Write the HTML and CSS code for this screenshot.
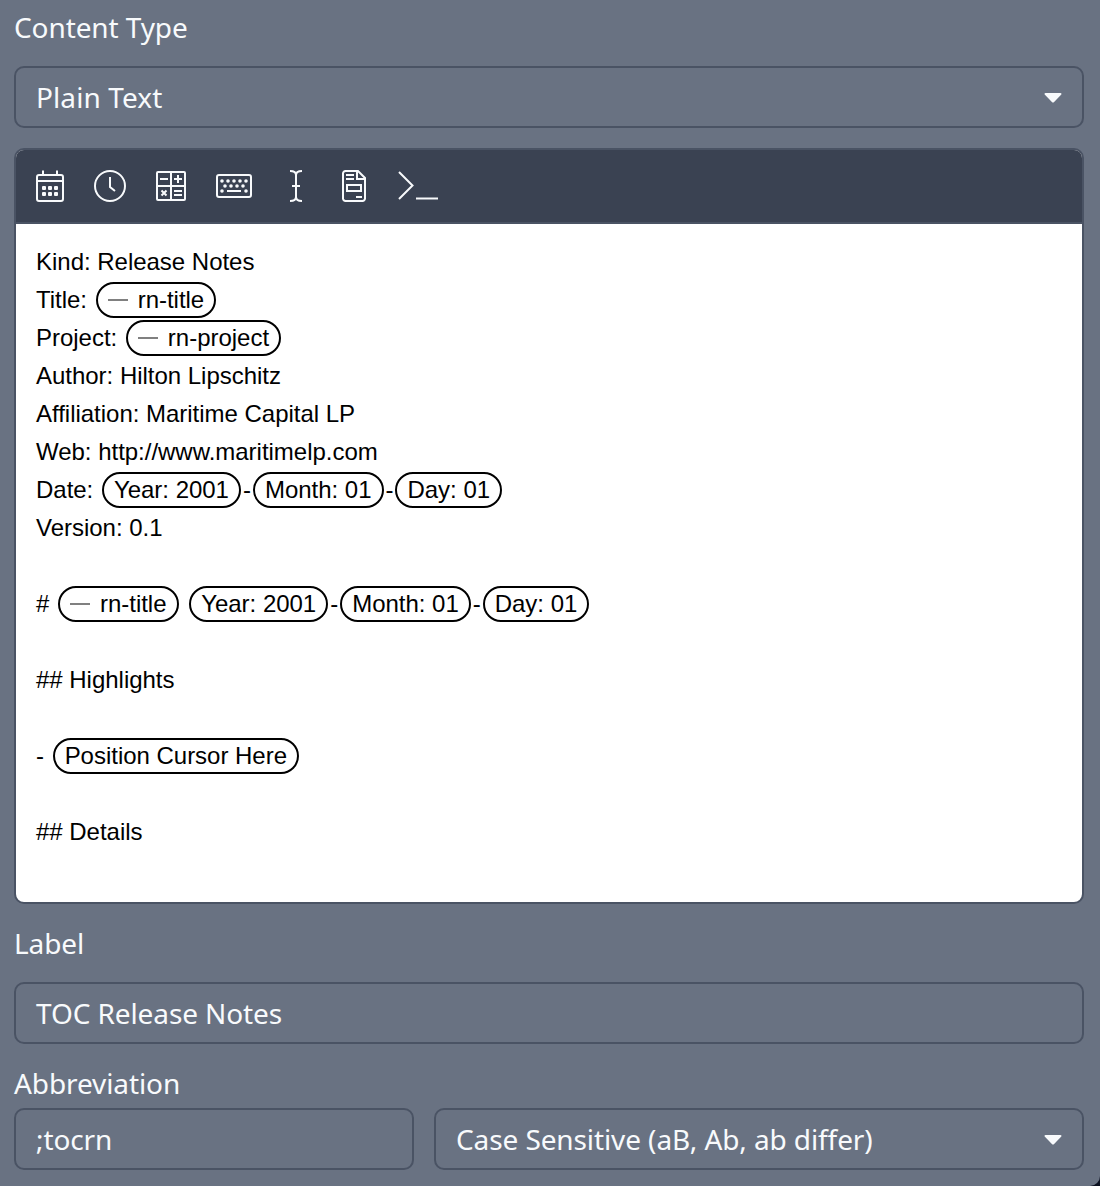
FILE: index.html
```html
<!DOCTYPE html>
<html lang="en">
<head>
<meta charset="utf-8">
<title>Snippet editor</title>
<link rel="stylesheet" href="styles.css">
</head>
<body>
<main class="panel">
  <div class="label">Content Type</div>
  <div class="field type-field"><span class="loose">Plain Text</span><svg class="caret" viewBox="0 0 18 10"><path d="M1.500 0h15c1 0 1.300 1 .6 1.700L10.100 8.900q-1.100 1-2.200 0L.9 1.700C.2 1 .5 0 1.500 0z"/></svg></div>
  <section class="editor">
    <div class="toolbar">
      <svg class="icon calendar" viewBox="0 0 28 32"><path d="M1 7a2 2 0 0 1 2-2h22a2 2 0 0 1 2 2v22a2 2 0 0 1-2 2H3a2 2 0 0 1-2-2zM1 11h26M7 .5V5M21 .5V5"/><g class="solid"><rect x="6" y="16" width="4" height="4" rx="1"/><rect x="12" y="16" width="4" height="4" rx="1"/><rect x="18" y="16" width="4" height="4" rx="1"/><rect x="6" y="22" width="4" height="4" rx="1"/><rect x="12" y="22" width="4" height="4" rx="1"/><rect x="18" y="22" width="4" height="4" rx="1"/></g></svg>
      <svg class="icon clock" viewBox="0 0 32 32"><circle cx="16" cy="16" r="15"/><path d="M16 7v10l5 4"/></svg>
      <svg class="icon calc" viewBox="0 0 30 30"><rect x="1" y="1" width="28" height="28" rx="1"/><path d="M15 1v28M1 15h28M4 8h8M18 8h8M22 4v8M18 20h8M18 24h8M5.500 19.500l5 5M10.500 19.500l-5 5"/></svg>
      <svg class="icon keyboard" viewBox="0 0 36 24"><rect x="1" y="1" width="34" height="22" rx="2"/><path d="M11 17h14"/><path class="keys" d="M6 7h0M12 7h0M18 7h0M24 7h0M30 7h0M9 12h0M15 12h0M21 12h0M27 12h0M6 17h0M30 17h0"/></svg>
      <svg class="icon cursor" viewBox="0 0 12 32"><path d="M0 1c3 0 6 1 6 4 0-3 3-4 6-4M6 4v24M0 31c3 0 6-1 6-4 0 3 3 4 6 4M2 16h8"/></svg>
      <svg class="icon document" viewBox="0 0 24 32"><path d="M3.500 1H16l7 7v20.500a2.500 2.500 0 0 1-2.500 2.500h-17A2.500 2.500 0 0 1 1 28.500v-25A2.500 2.500 0 0 1 3.500 1zM15 1v8h8M4 5h8M4 9h8M14 27h6M5 15h14v6H5z"/></svg>
      <svg class="icon terminal" viewBox="0 0 40 30"><path d="M1 1l13.500 13.500L1 28M18 27.500h22"/></svg>
    </div>
    <div class="content">
      <div>Kind: Release Notes</div>
      <div>Title: <span class="pill"><i></i>rn-title</span></div>
      <div>Project: <span class="pill"><i></i>rn-project</span></div>
      <div>Author: Hilton Lipschitz</div>
      <div>Affiliation: Maritime Capital LP</div>
      <div>Web: http://www.maritimelp.com</div>
      <div>Date: <span class="pill">Year: 2001</span>-<span class="pill">Month: 01</span>-<span class="pill">Day: 01</span></div>
      <div>Version: 0.1</div>
      <div><br></div>
      <div># <span class="pill"><i></i>rn-title</span> <span class="pill">Year: 2001</span>-<span class="pill">Month: 01</span>-<span class="pill">Day: 01</span></div>
      <div><br></div>
      <div>## Highlights</div>
      <div><br></div>
      <div>- <span class="pill">Position Cursor Here</span></div>
      <div><br></div>
      <div>## Details</div>
    </div>
  </section>
  <div class="label">Label</div>
  <div class="field name-field"><span>TOC Release Notes</span></div>
  <div class="label">Abbreviation</div>
  <div class="row">
    <div class="field"><span>;tocrn</span></div>
    <div class="field"><span>Case Sensitive (aB, Ab, ab differ)</span><svg class="caret" viewBox="0 0 18 10"><path d="M1.500 0h15c1 0 1.300 1 .6 1.700L10.100 8.900q-1.100 1-2.200 0L.9 1.700C.2 1 .5 0 1.500 0z"/></svg></div>
  </div>
</main>
</body>
</html>
```
FILE: styles.css
```css
* { box-sizing: border-box; }
body { margin: 0; background: #0b1020; }
.panel {
  height: 1186px;
  padding: 7px 16px 0 14px;
  background: #697282;
  border-bottom-right-radius: 10px;
  color: #f8fafc;
  font: 28px/40px "Noto Sans", sans-serif;
  letter-spacing: -0.1px;
  overflow: hidden;
}
.label { height: 40px; }
.loose { letter-spacing: 0.1px; }
.field {
  display: flex;
  align-items: center;
  justify-content: space-between;
  height: 62px;
  padding: 0 20px;
  border: 2px solid #4a5364;
  border-radius: 10px;
}
.type-field { margin: 19px 0 20px; }
.name-field { margin: 19px 0 19px; }
.caret { width: 18px; height: 10px; margin-top: 1px; fill: #f8fafc; }
.editor {
  height: 756px;
  margin-bottom: 19px;
  border: 2px solid #4a5364;
  border-radius: 10px;
  background: #fff;
  overflow: hidden;
}
.toolbar {
  display: flex;
  align-items: center;
  height: 74px;
  padding-left: 20px;
  border-bottom: 2px solid #4a5364;
  background: #3a4252;
}
.icon { fill: none; stroke: #f8fafc; stroke-width: 2; }
.calendar { width: 28px; height: 32px; margin-right: 30px; }
.clock { width: 32px; height: 32px; margin-right: 30px; }
.calc { width: 30px; height: 30px; margin-right: 30px; }
.keyboard { width: 36px; height: 24px; margin-right: 38px; }
.cursor { width: 12px; height: 32px; margin-right: 40px; }
.document { width: 24px; height: 32px; margin-right: 32px; }
.terminal { width: 40px; height: 30px; }
.solid { fill: #f8fafc; stroke: none; }
.keys { stroke-width: 3.6; stroke-linecap: round; }
.content {
  padding: 19px 20px;
  color: #000;
  font: 24px/38px "Liberation Sans", Arial, sans-serif;
  letter-spacing: -0.02px;
}
.content > div { height: 38px; white-space: nowrap; }
.pill {
  display: inline-block;
  height: 36px;
  margin: 0 2px;
  padding: 0 10px;
  border: 2px solid #000;
  border-radius: 18px;
  line-height: 32px;
}
.pill i {
  display: inline-block;
  width: 20px;
  height: 2px;
  margin-right: 10px;
  background: #808080;
  vertical-align: 7px;
}
.row { display: grid; grid-template-columns: 400px 1fr; gap: 20px; margin-top: 5px; }
```
